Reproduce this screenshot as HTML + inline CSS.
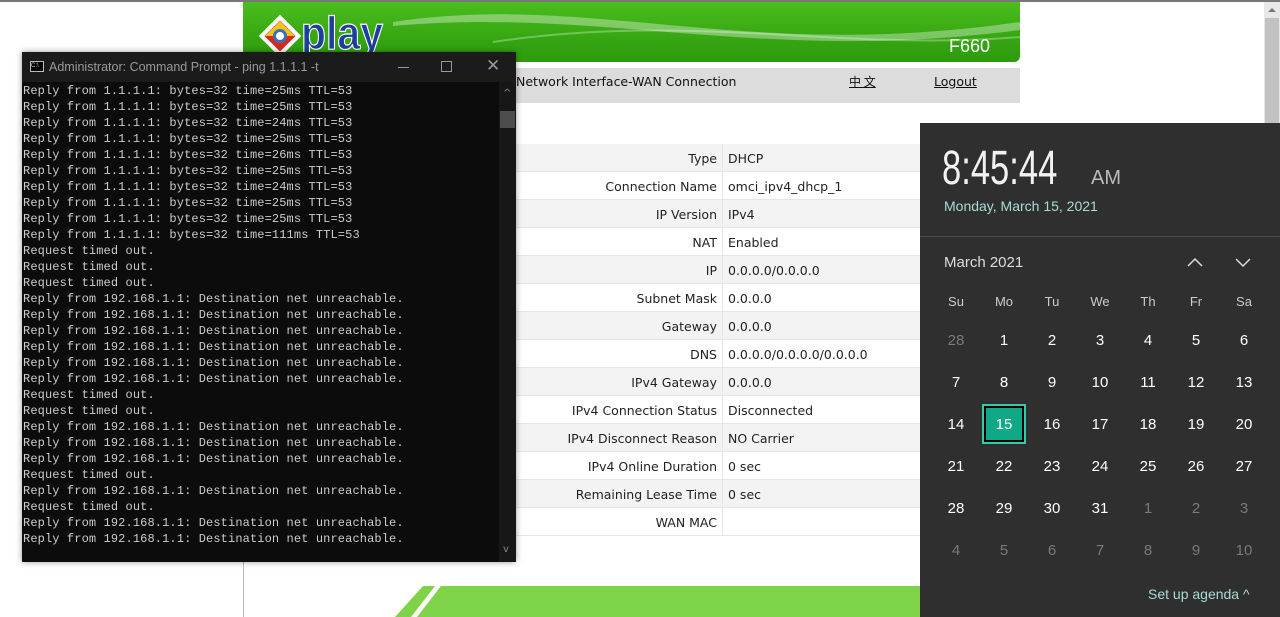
<!DOCTYPE html>
<html><head><meta charset="utf-8"><style>
*{margin:0;padding:0;box-sizing:border-box}
body{width:1280px;height:617px;overflow:hidden;background:#fff;position:relative;font-family:"DejaVu Sans","Liberation Sans",sans-serif}
.abs{position:absolute}
#topline{left:0;top:0;width:1280px;height:2px;background:#777}
#pageedge{left:243px;top:2px;width:1px;height:615px;background:#bbb}
#hdr{left:243px;top:2px;width:777px;height:60px;border-radius:0 0 6px 6px;background:linear-gradient(180deg,#4cbd1e 0%,#36a612 60%,#2e9a0e 100%);overflow:hidden}
#nav{left:244px;top:68px;width:776px;height:35px;background:#dcdcdc}
#nav span{position:absolute;top:6px;font-size:12.5px;color:#111}
.row{position:absolute;left:244px;width:676px;height:28px;border-bottom:1px solid #e6e6e6;font-size:12.5px;color:#222}
.row .l{position:absolute;right:203px;top:7px;text-align:right}
.row .v{position:absolute;left:484px;top:7px}
.row .sep{position:absolute;left:478px;top:0;width:1px;height:28px;background:#e6e6e6}
.g{background:#f3f3f3}
#cmd{left:22px;top:52px;width:494px;height:510px;background:#0c0c0c;box-shadow:0 0 6px rgba(0,0,0,.4)}
#title{position:absolute;left:0;top:0;width:494px;height:30px;background:#1b1b1b;color:#9a9a9a;font-family:"Liberation Sans",sans-serif;font-size:12.5px}
#lines{position:absolute;left:1px;top:31px;font-family:"Liberation Mono",monospace;font-size:12px;letter-spacing:0.12px;line-height:16px;color:#cccccc;white-space:pre}
#cal{left:920px;top:123px;width:360px;height:494px;background:#2f2f2f;color:#fff;font-family:"Liberation Sans",sans-serif}
.d{position:absolute;width:48px;text-align:center;font-size:15px;color:#fff}
.dim{color:#7a7a7a}
</style></head><body>
<div class="abs" id="topline"></div>
<div class="abs" id="pageedge"></div>
<div class="abs" id="hdr">
<svg width="777" height="60" style="position:absolute;left:0;top:0">
<path d="M150 20 C350 -10 500 60 777 20 L777 28 C520 62 360 5 150 24Z" fill="rgba(255,255,255,0.35)"/>
<path d="M250 40 C450 10 600 50 777 35" stroke="rgba(255,255,255,.3)" fill="none" stroke-width="2"/>
<g transform="translate(37,34)"><rect x="-15" y="-15" width="30" height="30" transform="rotate(45)" fill="#fff"/><rect x="-11" y="-11" width="22" height="22" transform="rotate(45)" fill="#d62a1e"/><path d="M-15 0 L0 -15 L15 0Z" fill="#f0c419"/><circle r="7" fill="#3a6fc0"/><circle r="4" fill="#fff"/></g>
<text x="58" y="47" font-family="Liberation Sans" font-weight="bold" font-size="46" fill="#1d3e9a" stroke="#fff" stroke-width="1.2" textLength="82" lengthAdjust="spacingAndGlyphs">play</text>
<text x="706" y="50" font-family="Liberation Sans" font-size="18" fill="#fff">F660</text>
</svg></div>
<div class="abs" id="nav"><span style="left:272px">Network Interface-WAN Connection</span><span style="left:605px;text-decoration:underline;font-family:'Noto Sans CJK SC',sans-serif;font-size:12px;top:5px">中 文</span><span style="left:690px;text-decoration:underline">Logout</span></div>

<div class="row g" style="top:144px"><div class="sep"></div><span class="l">Type</span><span class="v">DHCP</span></div>
<div class="row" style="top:172px"><div class="sep"></div><span class="l">Connection Name</span><span class="v">omci_ipv4_dhcp_1</span></div>
<div class="row g" style="top:200px"><div class="sep"></div><span class="l">IP Version</span><span class="v">IPv4</span></div>
<div class="row" style="top:228px"><div class="sep"></div><span class="l">NAT</span><span class="v">Enabled</span></div>
<div class="row g" style="top:256px"><div class="sep"></div><span class="l">IP</span><span class="v">0.0.0.0/0.0.0.0</span></div>
<div class="row" style="top:284px"><div class="sep"></div><span class="l">Subnet Mask</span><span class="v">0.0.0.0</span></div>
<div class="row g" style="top:312px"><div class="sep"></div><span class="l">Gateway</span><span class="v">0.0.0.0</span></div>
<div class="row" style="top:340px"><div class="sep"></div><span class="l">DNS</span><span class="v">0.0.0.0/0.0.0.0/0.0.0.0</span></div>
<div class="row g" style="top:368px"><div class="sep"></div><span class="l">IPv4 Gateway</span><span class="v">0.0.0.0</span></div>
<div class="row" style="top:396px"><div class="sep"></div><span class="l">IPv4 Connection Status</span><span class="v">Disconnected</span></div>
<div class="row g" style="top:424px"><div class="sep"></div><span class="l">IPv4 Disconnect Reason</span><span class="v">NO Carrier</span></div>
<div class="row" style="top:452px"><div class="sep"></div><span class="l">IPv4 Online Duration</span><span class="v">0 sec</span></div>
<div class="row g" style="top:480px"><div class="sep"></div><span class="l">Remaining Lease Time</span><span class="v">0 sec</span></div>
<div class="row" style="top:508px"><div class="sep"></div><span class="l">WAN MAC</span><span class="v"></span></div>

<svg class="abs" style="left:395px;top:586px" width="530" height="31"><path d="M28 0 L530 0 L530 31 L0 31Z" fill="#7ed348"/><path d="M40 0 L46 0 L22 31 L16 31Z" fill="#fff"/></svg>

<div class="abs" style="left:1264px;top:2px;width:16px;height:121px;background:#e8e8e8"><div style="position:absolute;left:1px;top:16px;width:14px;height:105px;background:#c2c2c2"></div><div style="position:absolute;left:4px;top:6px;border:4px solid transparent;border-bottom:4px solid #777;border-top:0"></div></div>

<div class="abs" id="cmd">
<div id="title">
<div style="position:absolute;left:8px;top:9px;width:14px;height:11px;border:1px solid #bbb;background:#000;font-size:6px;color:#ccc;line-height:8px">C:\</div>
<span style="position:absolute;left:27px;top:8px">Administrator: Command Prompt - ping  1.1.1.1 -t</span>
<div style="position:absolute;left:376px;top:15px;width:11px;height:1px;background:#999"></div>
<div style="position:absolute;left:419px;top:9px;width:11px;height:11px;border:1px solid #999"></div>
<span style="position:absolute;left:464px;top:4px;font-size:17px;color:#999">✕</span>
</div>
<div id="lines">Reply from 1.1.1.1: bytes=32 time=25ms TTL=53
Reply from 1.1.1.1: bytes=32 time=25ms TTL=53
Reply from 1.1.1.1: bytes=32 time=24ms TTL=53
Reply from 1.1.1.1: bytes=32 time=25ms TTL=53
Reply from 1.1.1.1: bytes=32 time=26ms TTL=53
Reply from 1.1.1.1: bytes=32 time=25ms TTL=53
Reply from 1.1.1.1: bytes=32 time=24ms TTL=53
Reply from 1.1.1.1: bytes=32 time=25ms TTL=53
Reply from 1.1.1.1: bytes=32 time=25ms TTL=53
Reply from 1.1.1.1: bytes=32 time=111ms TTL=53
Request timed out.
Request timed out.
Request timed out.
Reply from 192.168.1.1: Destination net unreachable.
Reply from 192.168.1.1: Destination net unreachable.
Reply from 192.168.1.1: Destination net unreachable.
Reply from 192.168.1.1: Destination net unreachable.
Reply from 192.168.1.1: Destination net unreachable.
Reply from 192.168.1.1: Destination net unreachable.
Request timed out.
Request timed out.
Reply from 192.168.1.1: Destination net unreachable.
Reply from 192.168.1.1: Destination net unreachable.
Reply from 192.168.1.1: Destination net unreachable.
Request timed out.
Reply from 192.168.1.1: Destination net unreachable.
Request timed out.
Reply from 192.168.1.1: Destination net unreachable.
Reply from 192.168.1.1: Destination net unreachable.</div>
<div style="position:absolute;left:477px;top:30px;width:17px;height:480px;background:#171717"><div style="position:absolute;left:1px;top:29px;width:15px;height:17px;background:#4d4d4d"></div><span style="position:absolute;left:4px;top:6px;color:#888;font-size:10px">^</span><span style="position:absolute;left:4px;top:462px;color:#888;font-size:10px">v</span></div>
</div>

<div class="abs" id="cal">
<div style="position:absolute;left:22px;top:18px;font-size:48px;color:#f2f2f2;transform:scaleX(0.72);transform-origin:0 0;white-space:nowrap">8:45:44</div>
<div style="position:absolute;left:171px;top:44px;font-size:20px;color:#bbb">AM</div>
<div style="position:absolute;left:24px;top:75px;font-size:14px;color:#a7dcd4">Monday, March 15, 2021</div>
<div style="position:absolute;left:0;top:113px;width:360px;height:1px;background:#4a4a4a"></div>
<div style="position:absolute;left:24px;top:131px;font-size:15px;color:#ddd">March 2021</div>
<svg style="position:absolute;left:266px;top:132px" width="70" height="14"><path d="M2 11 L9 4 L16 11" stroke="#ddd" stroke-width="1.5" fill="none"/><path d="M50 4 L57 11 L64 4" stroke="#ddd" stroke-width="1.5" fill="none"/></svg>
<div id="days"></div>
<div style="position:absolute;left:62px;top:281px;width:44px;height:40px;background:#10a886;border:2px solid #2ccfa6;box-shadow:inset 0 0 0 2px #000"></div>
<div style="position:absolute;left:228px;top:463px;font-size:14px;color:#a7dcd4">Set up agenda ^</div>
</div>
<script>
var h=["Su","Mo","Tu","We","Th","Fr","Sa"],c=document.getElementById("cal"),s="";
h.forEach(function(t,i){s+='<div class="d" style="left:'+(12+i*48)+'px;top:171px;font-size:13px;color:#ccc">'+t+'</div>'});
var n=[28];for(var i=1;i<=31;i++)n.push(i);for(i=1;i<=10;i++)n.push(i);
n.forEach(function(t,k){var r=Math.floor(k/7),col=k%7,dim=(k==0||k>31);
s+='<div class="d'+(dim?' dim':'')+'" style="left:'+(12+col*48)+'px;top:'+(209+r*42)+'px">'+t+'</div>'});
c.insertAdjacentHTML("beforeend",s);
</script>
</body></html>
